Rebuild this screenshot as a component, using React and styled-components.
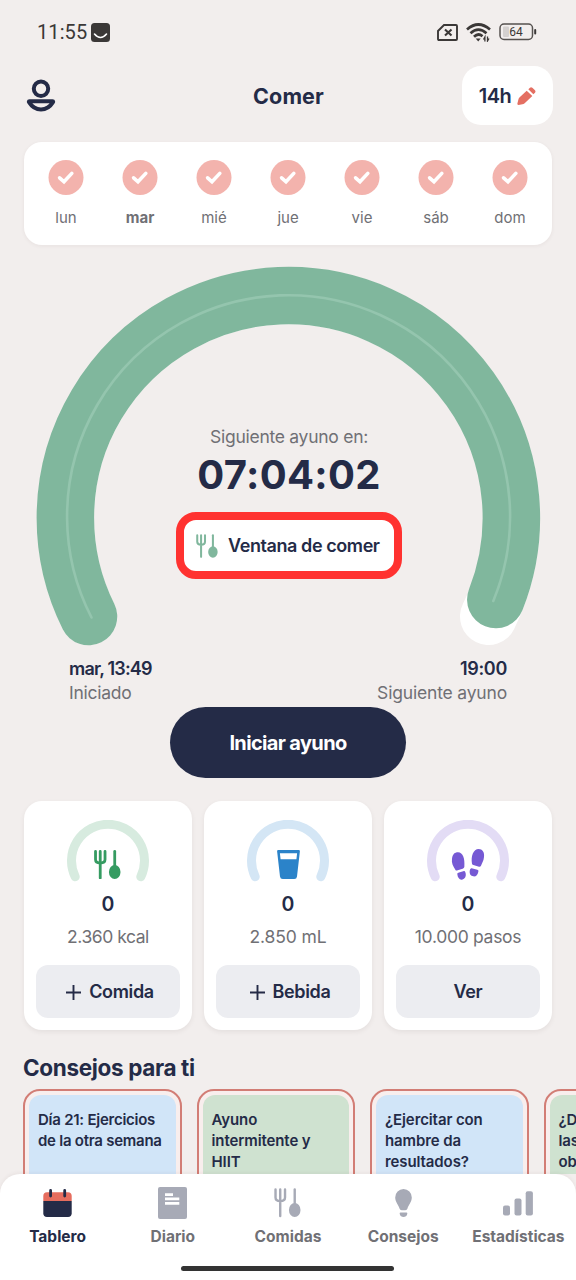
import React from "react";
import styled, { createGlobalStyle } from "styled-components";

const NAVY = "#242b47";
const GREY = "#707075";

const GlobalStyle = createGlobalStyle`
  * { box-sizing: border-box; }
  body {
    margin: 0;
    background: #f2eeed;
    font-family: Inter, "Open Sans", sans-serif;
    color: ${NAVY};
  }
  svg { display: block; flex: none; }
  button {
    border: 0;
    padding: 0;
    font-family: inherit;
    color: inherit;
  }
`;

const Screen = styled.div`
  position: relative;
  width: 576px;
  height: 1280px;
  overflow: hidden;
  display: flex;
  flex-direction: column;
`;

const Text = styled.span`
  font-size: ${p => p.size}px;
  line-height: ${p => p.line || 24}px;
  font-weight: ${p => p.weight || 400};
  letter-spacing: ${p => p.track || 0}px;
  color: ${p => p.color || NAVY};
  white-space: pre-line;
`;

const StatusBar = styled.div`
  height: 66px;
  flex: none;
  display: flex;
  align-items: flex-start;
  justify-content: space-between;
  padding: 20px 39px 0 37px;
  color: #3b3837;
`;

const Clock = styled.div`
  display: flex;
  align-items: center;
  gap: 4px;
  font: 400 20px/24px Roboto, sans-serif;
  letter-spacing: 0.1px;
`;

const StatusIcons = styled.div`
  display: flex;
  align-items: center;
  gap: 8px;
  height: 24px;
`;

const Header = styled.header`
  height: 59px;
  flex: none;
  display: grid;
  grid-template-columns: 91px 1fr 91px;
  align-items: center;
  justify-items: center;
  padding: 0 23px 0 24px;
  svg:first-child { justify-self: start; }
`;

const GoalButton = styled.button`
  width: 91px;
  height: 59px;
  border-radius: 19px;
  background: #fff;
  display: flex;
  align-items: center;
  justify-content: center;
  gap: 6px;
`;

const Week = styled.section`
  flex: none;
  height: 103px;
  margin: 17px 24px 0;
  padding: 18px 5px 0;
  border-radius: 18px;
  background: #fff;
  box-shadow: 0 1px 4px rgba(60, 40, 40, 0.06);
  display: grid;
  grid-template-columns: repeat(7, 1fr);
`;

const Day = styled.div`
  display: flex;
  flex-direction: column;
  align-items: center;
  gap: 10px;
`;

const Ring = styled.section`
  flex: none;
  height: 410px;
  display: grid;
  > * { grid-area: 1 / 1; }
`;

const Countdown = styled.div`
  display: flex;
  flex-direction: column;
  align-items: center;
  padding: 180px 0 0 2px;
`;

const WindowButton = styled.button`
  width: 226px;
  height: 67px;
  margin-top: 11px;
  border: 8px solid #ff3230;
  border-radius: 20px;
  background: #fff;
  display: flex;
  align-items: center;
  gap: 10px;
  padding: 1px 0 0 12px;
`;

const Times = styled.div`
  flex: none;
  height: 52px;
  padding: 2px 69px 0;
  display: flex;
  justify-content: space-between;
`;

const TimeBlock = styled.div`
  display: flex;
  flex-direction: column;
  align-items: ${p => (p.end ? "flex-end" : "flex-start")};
`;

const StartButton = styled.button`
  flex: none;
  align-self: center;
  width: 236px;
  height: 71px;
  border-radius: 36px;
  background: ${NAVY};
`;

const Stats = styled.section`
  flex: none;
  display: grid;
  grid-template-columns: repeat(3, 1fr);
  gap: 12px;
  margin: 23px 24px 0;
`;

const StatCard = styled.div`
  height: 229px;
  border-radius: 18px;
  background: #fff;
  box-shadow: 0 2px 5px rgba(60, 40, 40, 0.07);
  display: flex;
  flex-direction: column;
  align-items: center;
  padding: 19px 12px 12px;
`;

const Gauge = styled.div`
  display: grid;
  justify-items: center;
  height: 72px;
  > * { grid-area: 1 / 1; }
  > :last-child { align-self: end; margin-bottom: ${p => p.lift}px; }
`;

const StatButton = styled.button`
  width: 100%;
  height: 53px;
  margin-top: auto;
  border-radius: 12px;
  background: #ecedf1;
  display: flex;
  align-items: center;
  justify-content: center;
  gap: 8px;
  padding: 1px 0 0 ${p => (p.$plus ? 4 : 0)}px;
`;

const TipsTitle = styled.h2`
  flex: none;
  margin: 23px 23px 6px;
  font-size: 22.5px;
  line-height: 30px;
  font-weight: 700;
  letter-spacing: -0.35px;
`;

const Tips = styled.div`
  flex: none;
  height: 85px;
  overflow: hidden;
  display: flex;
  gap: 15px;
  padding-left: 23px;
`;

const Tip = styled.div`
  flex: none;
  width: 158.5px;
  height: 150px;
  padding: 4px;
  border: 2px solid #d27d75;
  border-radius: 17px;
  background: #f8eeed;
`;

const TipBody = styled.div`
  height: 100%;
  border-radius: 12px;
  padding: 14px 8px 0 9px;
  background: ${p => p.tone};
`;

const NavBar = styled.nav`
  position: absolute;
  left: 0;
  right: 0;
  bottom: 0;
  height: 106px;
  border-radius: 20px 20px 0 0;
  background: #fff;
  box-shadow: 0 -1px 4px rgba(60, 40, 40, 0.06);
  display: flex;
  flex-direction: column;
  align-items: center;
  justify-content: space-between;
  padding: 12px 0 9px;
`;

const NavItems = styled.div`
  width: 100%;
  display: grid;
  grid-template-columns: repeat(5, 1fr);
`;

const NavItem = styled.div`
  display: flex;
  flex-direction: column;
  align-items: center;
  gap: 5px;
`;

const NavIcon = styled.div`
  height: 34px;
  display: flex;
  align-items: center;
`;

const HomeIndicator = styled.div`
  width: 213px;
  height: 5px;
  margin-right: 1px;
  border-radius: 3px;
  background: #333;
`;

const Utensils = ({ color, height, stroke = 2.8 }) => (
  <svg width={height * 0.92} height={height} viewBox="0 0 27 29.4" fill="none" stroke={color} strokeWidth={stroke} strokeLinecap="round">
    <path d="M1.5 1.5V9.5Q1.5 13 6.2 13Q11 13 11 9.5V1.5M6.2 1.5V28" />
    <path d="M20.7 1.5V18" />
    <ellipse cx="20.7" cy="22" rx="5.8" ry="7" fill={color} stroke="none" />
  </svg>
);

const Glass = () => (
  <svg width="23" height="29" viewBox="0 0 23 29">
    <path
      fill="#2b83c9"
      fillRule="evenodd"
      d="M1.3 0H21.7Q23 0 22.9 1.3L20 26.5Q19.7 29 17.3 29H5.7Q3.3 29 3 26.5L.1 1.3Q0 0 1.3 0ZM2.9 3.3L3.6 9.3H19.4L20.1 3.3Z"
    />
  </svg>
);

const Steps = () => (
  <svg width="34" height="32" viewBox="0 0 102 96" fill="#7659d4">
    <path d="M13 65C6 54 1 44 3 32C5 19 11 13 21 13C36 14 42 31 40 57Q39 61 35 62L20 67Q15 69 13 65Z" />
    <path d="M19 79Q18 75 22 74L39 69Q42 69 43 73C47 84 42 94 33 95C25 96 20 89 19 79Z" />
    <path d="M63 47C59 25 67 3 83 3C94 3 101 12 99 27C98 39 93 45 90 53Q88 57 84 56L67 51Q63 50 63 47Z" />
    <path d="M56 69Q57 60 62 61L79 65Q84 66 82 71C80 81 75 86 67 85C59 84 55 78 56 69Z" />
  </svg>
);

const Person = () => (
  <svg width="34" height="34" viewBox="0 0 34 34" fill="none" stroke={NAVY} strokeWidth="4">
    <circle cx="17" cy="9.7" r="7.2" />
    <path strokeLinejoin="round" d="M5.4 22.2H28.6Q29.6 22.2 28.8 23.4Q24.5 30.4 17 30.4Q9.5 30.4 5.2 23.4Q4.4 22.2 5.4 22.2Z" />
  </svg>
);

const Pencil = () => (
  <svg width="19" height="18" viewBox="0 0 55 54" fill="#e46f62">
    <path d="M28 11L45 27L22 49Q19 52 15 52L4 54Q0 54 0 50L3 38Q4 34 7 31Z" />
    <path d="M33 7L38 2Q41-1 45 2L53 10Q56 14 53 17L48 22Z" />
  </svg>
);

const Check = () => (
  <svg width="36" height="36" viewBox="0 0 36 36">
    <circle cx="18" cy="17.5" r="17.5" fill="#f3b3ad" />
    <path d="M11.6 17.8L16 21.8L23.8 13.4" fill="none" stroke="#fff" strokeWidth="3.6" strokeLinecap="round" />
  </svg>
);

const Plus = () => (
  <svg width="15" height="15" viewBox="0 0 15 15" stroke={NAVY} strokeWidth="1.9">
    <path d="M7.5 0V15M0 7.5H15" />
  </svg>
);

const FastingRing = () => (
  <svg width="576" height="410" viewBox="0 245 576 410" fill="none" strokeLinecap="round">
    <path d="M88.500 616.500A223 222.300 0 1 1 488.500 616.500" stroke="#fff" strokeWidth="57" />
    <path d="M88.500 616.500A223 222.300 0 1 1 495.800 599.500" stroke="#80b79d" strokeWidth="57.500" />
    <path d="M91.500 617.500A221.500 221.300 0 1 1 493.300 601" stroke="#94c5ae" strokeWidth="2.600" />
  </svg>
);

const GaugeArc = ({ color }) => (
  <svg width="82" height="62" viewBox="0 0 82 62" fill="none">
    <path d="M8.2 56.8A36.5 36.5 0 1 1 73.8 56.8" stroke={color} strokeWidth="9" strokeLinecap="round" />
  </svg>
);

const Calendar = () => (
  <svg width="29" height="29" viewBox="0 0 29 29">
    <path d="M.3 12V7Q.3 3.2 4 3.2H25Q28.7 3.2 28.7 7V12Z" fill="#e66d5e" />
    <path d="M.3 12H28.7V24.3Q28.7 28 25 28H4Q.3 28 .3 24.3Z" fill={NAVY} />
    <path d="M7.6 1.5V7M21.7 1.5V7" stroke={NAVY} strokeWidth="2.8" strokeLinecap="round" />
  </svg>
);

const Diary = () => (
  <svg width="29" height="32" viewBox="0 0 29 32">
    <rect width="29" height="32" rx="2" fill="#a7aab6" />
    <path d="M7 7.7H15M7 11.8H21.3M7 16.4H21.3" stroke="#fff" strokeWidth="2.8" />
  </svg>
);

const Bulb = () => (
  <svg width="17" height="29" viewBox="0 0 17 29" fill="#a7aab6">
    <path d="M8.5 0A8.4 8.4 0 0 1 16.8 8.5C16.8 13 13.3 16 12.5 19.5Q12 21.3 10.3 21.3H6.7Q5 21.3 4.5 19.5C3.7 16 .2 13 .2 8.5A8.4 8.4 0 0 1 8.5 0Z" />
    <path d="M5.500 23.500H11.500Q12.500 23.500 12.300 24.800C11.800 29.200 5.200 29.200 4.700 24.800Q4.500 23.500 5.500 23.500Z" />
  </svg>
);

const Bars = () => (
  <svg width="30" height="25" viewBox="0 0 30 25" fill="#a7aab6">
    <rect y="14.5" width="7" height="10" rx="2" />
    <rect x="11.5" y="7.5" width="7" height="17" rx="2" />
    <rect x="22.7" y="0.3" width="7.2" height="24.2" rx="2" />
  </svg>
);

const days = ["lun", "mar", "mié", "jue", "vie", "sáb", "dom"];

const stats = [
  { goal: "2.360 kcal", action: "Comida", plus: true, arc: "#d7ebdf", lift: 13, track: -0.45, icon: <Utensils color="#359b61" height={29.4} /> },
  { goal: "2.850 mL", action: "Bebida", plus: true, arc: "#d4e6f5", lift: 13, track: -0.1, icon: <Glass /> },
  { goal: "10.000 pasos", action: "Ver", arc: "#e3dcf5", lift: 12, track: -0.3, icon: <Steps /> }
];

const tips = [
  { tone: "#d1e5f8", text: "Día 21: Ejercicios\nde la otra semana", track: -0.25 },
  { tone: "#cfe2d0", text: "Ayuno\nintermitente y\nHIIT" },
  { tone: "#d1e5f8", text: "¿Ejercitar con\nhambre da\nresultados?" },
  { tone: "#cfe2d0", text: "¿D\nlas\nob" }
];

const tabs = [
  { label: "Tablero", icon: <Calendar />, active: true },
  { label: "Diario", icon: <Diary /> },
  { label: "Comidas", icon: <Utensils color="#a7aab6" height={29.4} stroke={2.4} /> },
  { label: "Consejos", icon: <Bulb /> },
  { label: "Estadísticas", icon: <Bars /> }
];

const Status = () => (
  <StatusBar>
    <Clock>
      11:55
      <svg width="19" height="19" viewBox="0 0 19 19">
        <rect width="19" height="19" rx="3.5" fill="#3b3837" />
        <path d="M3.5 11Q9.5 18 15.5 11" fill="none" stroke="#fff" strokeWidth="1.6" strokeLinecap="round" />
      </svg>
    </Clock>
    <StatusIcons>
      <svg width="21" height="17" viewBox="0 0 21 17" fill="none" stroke="#3b3837" strokeWidth="1.9">
        <path d="M7 1H19Q20 1 20 2V15Q20 16 19 16H2Q1 16 1 15V7Z" />
        <path d="M8 5.500L14.500 11.500M14.500 5.500L8 11.500" strokeWidth="2.1" />
      </svg>
      <svg width="25" height="19" viewBox="0 0 25 19" fill="none" stroke="#3b3837" strokeWidth="2.7">
        <path d="M1 6.500Q12.300-3.500 24 6.500M4.500 10.200Q12.300 3.200 20.500 10.200M8 13.800Q12.300 9.500 16.500 13.300" />
        <path d="M9.700 15.500H14.700L12.200 18.500Z" fill="#3b3837" stroke="none" />
        <path d="M18.900 18.500V14L17.500 16.500M21.500 13.500V18L23 15.500" strokeWidth="1.3" />
      </svg>
      <svg width="38" height="18" viewBox="0 0 38 18">
        <rect x="1" y="1" width="32.500" height="15.500" rx="4" fill="none" stroke="#55514f" strokeWidth="1.500" />
        <rect x="4" y="3.500" width="6" height="10.500" rx="1" fill="#d4d0cf" />
        <rect x="35.200" y="6" width="2" height="5.500" rx="1" fill="#3b3837" />
        <text x="17" y="13" textAnchor="middle" fontFamily="Roboto" fontSize="12" fill="#3b3837">64</text>
      </svg>
    </StatusIcons>
  </StatusBar>
);

const App = () => (
  <Screen>
    <GlobalStyle />
    <Status />
    <Header>
      <Person />
      <Text size={21.5} weight={650} track={0.1}>Comer</Text>
      <GoalButton>
        <Text size={20} weight={600} track={-0.5}>14h</Text>
        <Pencil />
      </GoalButton>
    </Header>
    <Week>
      {days.map(day => (
        <Day key={day}>
          <Check />
          <Text size={15} color={GREY} weight={day === "mar" ? 700 : 400}>{day}</Text>
        </Day>
      ))}
    </Week>
    <Ring>
      <FastingRing />
      <Countdown>
        <Text size={17.5} color={GREY} track={-0.27}>Siguiente ayuno en:</Text>
        <Text size={40} line={52} weight={750} track={0.3}>07:04:02</Text>
        <WindowButton>
          <Utensils color="#80b79d" height={24} stroke={2.5} />
          <Text size={18} weight={600} track={-0.42}>Ventana de comer</Text>
        </WindowButton>
      </Countdown>
    </Ring>
    <Times>
      <TimeBlock>
        <Text size={18} weight={600} track={-0.8}>mar, 13:49</Text>
        <Text size={17.5} color={GREY} track={-0.25}>Iniciado</Text>
      </TimeBlock>
      <TimeBlock end>
        <Text size={18} weight={600} track={-0.3}>19:00</Text>
        <Text size={17.5} color={GREY} track={-0.18}>Siguiente ayuno</Text>
      </TimeBlock>
    </Times>
    <StartButton>
      <Text size={20} weight={650} color="#fff" track={-0.65}>Iniciar ayuno</Text>
    </StartButton>
    <Stats>
      {stats.map(stat => (
        <StatCard key={stat.action}>
          <Gauge lift={stat.lift}>
            <GaugeArc color={stat.arc} />
            {stat.icon}
          </Gauge>
          <Text size={19.5} weight={600}>0</Text>
          <Text size={17.5} line={42} color={GREY} track={stat.track}>{stat.goal}</Text>
          <StatButton $plus={stat.plus}>
            {stat.plus && <Plus />}
            <Text size={18} weight={600} track={-0.35}>{stat.action}</Text>
          </StatButton>
        </StatCard>
      ))}
    </Stats>
    <TipsTitle>Consejos para ti</TipsTitle>
    <Tips>
      {tips.map(tip => (
        <Tip key={tip.text}>
          <TipBody tone={tip.tone}>
            <Text size={15} line={20} weight={600} track={tip.track || -0.1}>{tip.text}</Text>
          </TipBody>
        </Tip>
      ))}
    </Tips>
    <NavBar>
      <NavItems>
        {tabs.map(tab => (
          <NavItem key={tab.label}>
            <NavIcon>{tab.icon}</NavIcon>
            <Text size={15.5} weight={700} color={tab.active ? NAVY : GREY}>{tab.label}</Text>
          </NavItem>
        ))}
      </NavItems>
      <HomeIndicator />
    </NavBar>
  </Screen>
);

export default App;
